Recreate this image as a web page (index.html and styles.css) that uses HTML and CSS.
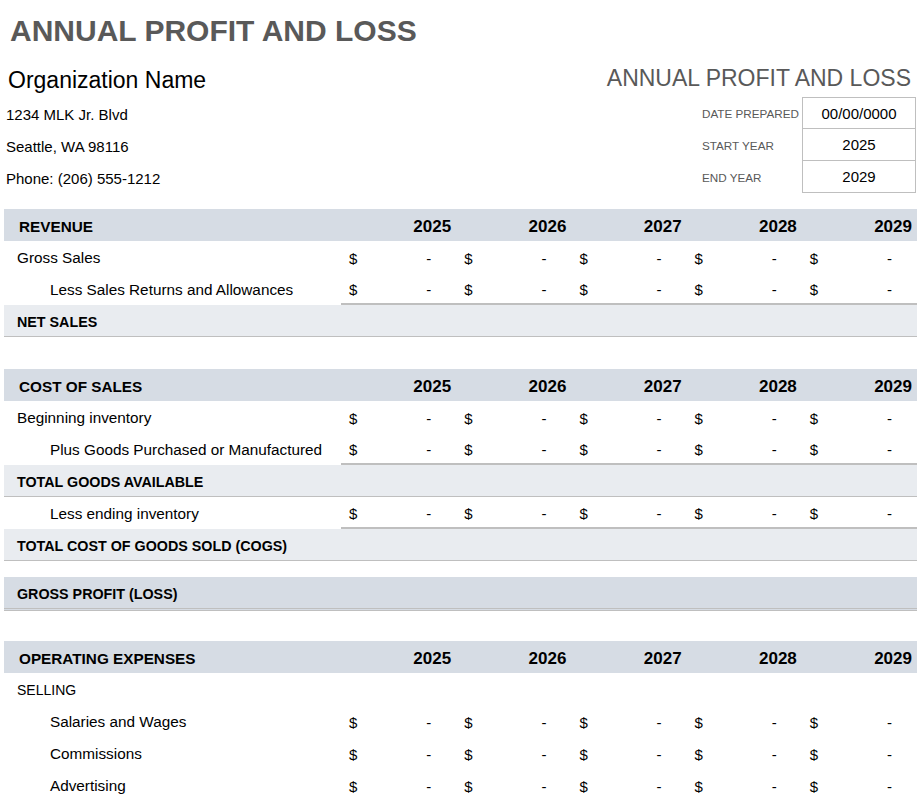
FILE: index.html
```html
<!DOCTYPE html>
<html lang="en">
<head>
<meta charset="utf-8">
<title>Annual Profit and Loss</title>
<link rel="stylesheet" href="styles.css">
</head>
<body>
<div class="page">
  <h1 class="title">ANNUAL PROFIT AND LOSS</h1>
  <div class="org-row">
    <div class="org-name">Organization Name</div>
    <div class="doc-title">ANNUAL PROFIT AND LOSS</div>
  </div>
  <div class="info">
    <div class="address">
      <div class="line">1234 MLK Jr. Blvd</div>
      <div class="line">Seattle, WA 98116</div>
      <div class="line">Phone: (206) 555-1212</div>
    </div>
    <div class="meta">
      <div class="meta-label">DATE PREPARED</div><div class="meta-value first">00/00/0000</div>
      <div class="meta-label">START YEAR</div><div class="meta-value">2025</div>
      <div class="meta-label">END YEAR</div><div class="meta-value">2029</div>
    </div>
  </div>

  <div class="sheet">
    <div class="row head"><div class="label">REVENUE</div><div class="year">2025</div><div class="year">2026</div><div class="year">2027</div><div class="year">2028</div><div class="year">2029</div></div>
    <div class="row item"><div class="label">Gross Sales</div><div class="amt"><span>$</span><span>-</span></div><div class="amt"><span>$</span><span>-</span></div><div class="amt"><span>$</span><span>-</span></div><div class="amt"><span>$</span><span>-</span></div><div class="amt"><span>$</span><span>-</span></div></div>
    <div class="row item rule"><div class="label indent">Less Sales Returns and Allowances</div><div class="amt"><span>$</span><span>-</span></div><div class="amt"><span>$</span><span>-</span></div><div class="amt"><span>$</span><span>-</span></div><div class="amt"><span>$</span><span>-</span></div><div class="amt"><span>$</span><span>-</span></div></div>
    <div class="row total"><div class="label">NET SALES</div></div>
    <div class="spacer-lg"></div>

    <div class="row head"><div class="label">COST OF SALES</div><div class="year">2025</div><div class="year">2026</div><div class="year">2027</div><div class="year">2028</div><div class="year">2029</div></div>
    <div class="row item"><div class="label">Beginning inventory</div><div class="amt"><span>$</span><span>-</span></div><div class="amt"><span>$</span><span>-</span></div><div class="amt"><span>$</span><span>-</span></div><div class="amt"><span>$</span><span>-</span></div><div class="amt"><span>$</span><span>-</span></div></div>
    <div class="row item rule"><div class="label indent">Plus Goods Purchased or Manufactured</div><div class="amt"><span>$</span><span>-</span></div><div class="amt"><span>$</span><span>-</span></div><div class="amt"><span>$</span><span>-</span></div><div class="amt"><span>$</span><span>-</span></div><div class="amt"><span>$</span><span>-</span></div></div>
    <div class="row total"><div class="label">TOTAL GOODS AVAILABLE</div></div>
    <div class="row item rule"><div class="label indent">Less ending inventory</div><div class="amt"><span>$</span><span>-</span></div><div class="amt"><span>$</span><span>-</span></div><div class="amt"><span>$</span><span>-</span></div><div class="amt"><span>$</span><span>-</span></div><div class="amt"><span>$</span><span>-</span></div></div>
    <div class="row total"><div class="label">TOTAL COST OF GOODS SOLD (COGS)</div></div>
    <div class="spacer-sm"></div>
    <div class="row gross"><div class="label">GROSS PROFIT (LOSS)</div></div>
    <div class="spacer-md"></div>

    <div class="row head"><div class="label">OPERATING EXPENSES</div><div class="year">2025</div><div class="year">2026</div><div class="year">2027</div><div class="year">2028</div><div class="year">2029</div></div>
    <div class="row item"><div class="label caps">SELLING</div></div>
    <div class="row item"><div class="label indent">Salaries and Wages</div><div class="amt"><span>$</span><span>-</span></div><div class="amt"><span>$</span><span>-</span></div><div class="amt"><span>$</span><span>-</span></div><div class="amt"><span>$</span><span>-</span></div><div class="amt"><span>$</span><span>-</span></div></div>
    <div class="row item"><div class="label indent">Commissions</div><div class="amt"><span>$</span><span>-</span></div><div class="amt"><span>$</span><span>-</span></div><div class="amt"><span>$</span><span>-</span></div><div class="amt"><span>$</span><span>-</span></div><div class="amt"><span>$</span><span>-</span></div></div>
    <div class="row item"><div class="label indent">Advertising</div><div class="amt"><span>$</span><span>-</span></div><div class="amt"><span>$</span><span>-</span></div><div class="amt"><span>$</span><span>-</span></div><div class="amt"><span>$</span><span>-</span></div><div class="amt"><span>$</span><span>-</span></div></div>
  </div>
</div>
</body>
</html>
```

FILE: styles.css
```css
* { box-sizing: border-box; }

body {
  margin: 0;
  font-family: "Liberation Sans", Arial, sans-serif;
  color: #000;
  background: #fff;
}

.page {
  width: 921px;
  padding: 0 4px;
}

.title {
  margin: 0;
  height: 65px;
  padding: 13px 0 0 6px;
  font-size: 30px;
  line-height: 36px;
  font-weight: bold;
  color: #595959;
}

.org-row {
  display: flex;
  justify-content: space-between;
  align-items: center;
  height: 32px;
}

.org-name {
  padding-left: 4px;
  font-size: 23px;
  margin-top: -2px;
}

.doc-title {
  padding-right: 6px;
  font-size: 23px;
  color: #595959;
  margin-top: -6px;
}

.info {
  display: flex;
  justify-content: space-between;
}

.address .line {
  display: flex;
  align-items: center;
  height: 32px;
  padding: 2px 0 0 2px;
  font-size: 15px;
}

.meta {
  display: grid;
  grid-template-columns: 100px 114px;
  grid-auto-rows: 32px;
  margin-right: 1px;
}

.meta-label {
  display: flex;
  align-items: center;
  overflow: hidden;
  white-space: nowrap;
  font-size: 11.7px;
  color: #595959;
}

.meta-value {
  display: flex;
  align-items: center;
  justify-content: center;
  border: 1px solid #bfbfbf;
  border-top: none;
  font-size: 15px;
}

.meta-value.first {
  border-top: 1px solid #bfbfbf;
}

.sheet {
  margin-top: 16px;
}

.row {
  display: grid;
  grid-template-columns: 337px repeat(5, 1fr);
  height: 32px;
  padding-top: 2px;
}

.row > div {
  display: flex;
  align-items: center;
  white-space: nowrap;
}

.head {
  background: #d6dce4;
  padding-top: 3px;
}

.head .label {
  padding-left: 15px;
  font-size: 15.3px;
  font-weight: bold;
}

.year {
  justify-content: flex-end;
  padding-right: 5px;
  font-size: 17px;
  font-weight: bold;
}

.item .label {
  padding-left: 13px;
  font-size: 15.3px;
}

.item .label.indent {
  padding-left: 46px;
}

.item .label.caps {
  font-size: 14px;
}

.amt {
  justify-content: space-between;
  padding: 0 25px 0 8px;
  font-size: 15px;
}

.rule .amt {
  border-bottom: 2px solid #bfbfbf;
}

.total {
  background: #e9ecf0;
  border-bottom: 1px solid #bfbfbf;
}

.total .label,
.gross .label {
  padding-left: 13px;
  font-size: 14.3px;
  font-weight: bold;
}

.gross {
  height: 34px;
  background: #d6dce4;
  border-bottom: 3px double #bfbfbf;
}

.spacer-lg { height: 32px; }
.spacer-sm { height: 16px; }
.spacer-md { height: 30px; }
```
